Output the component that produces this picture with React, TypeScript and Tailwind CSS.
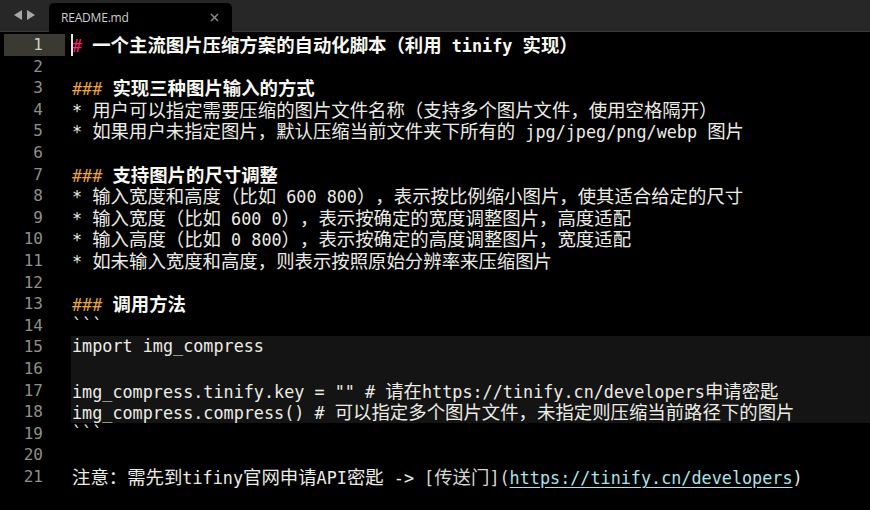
type Kind = "text" | "pink" | "orange" | "bold" | "link" | "dim"
type Token = [string, Kind?]

const lines: Token[][] = [
  [["#", "pink"], [" "], ["一个主流图片压缩方案的自动化脚本（利用 tinify 实现）", "bold"]],
  [],
  [["###", "orange"], [" "], ["实现三种图片输入的方式", "bold"]],
  [["* 用户可以指定需要压缩的图片文件名称（支持多个图片文件，使用空格隔开）"]],
  [["* 如果用户未指定图片，默认压缩当前文件夹下所有的 jpg/jpeg/png/webp 图片"]],
  [],
  [["###", "orange"], [" "], ["支持图片的尺寸调整", "bold"]],
  [["* 输入宽度和高度（比如 600 800），表示按比例缩小图片，使其适合给定的尺寸"]],
  [["* 输入宽度（比如 600 0），表示按确定的宽度调整图片，高度适配"]],
  [["* 输入高度（比如 0 800），表示按确定的高度调整图片，宽度适配"]],
  [["* 如未输入宽度和高度，则表示按照原始分辨率来压缩图片"]],
  [],
  [["###", "orange"], [" "], ["调用方法", "bold"]],
  [["```"]],
  [["import img_compress"]],
  [],
  [['img_compress.tinify.key = "" # 请在https://tinify.cn/developers申请密匙']],
  [["img_compress.compress() # 可以指定多个图片文件，未指定则压缩当前路径下的图片"]],
  [["```"]],
  [],
  [
    ["注意：需先到tifiny官网申请API密匙 -> "],
    ["[传送门](", "dim"],
    ["https://tinify.cn/developers", "link"],
    [")"],
  ],
]

const kindClass: Record<Kind, string> = {
  text: "text-[#ecece6]",
  pink: "text-[#f92672]",
  orange: "text-[#eaa43a]",
  bold: "text-[#f8f8f2] font-bold",
  link: "text-[#a9e4ec] underline underline-offset-[3px] decoration-[#a9e4ec]",
  dim: "text-[#d8d8d2]",
}

// split a string into runs of wide (CJK) and narrow (latin) characters
const splitRuns = (s: string) => {
  const out: { wide: boolean; s: string }[] = []
  for (const ch of s) {
    const wide = /[\u2E80-\u9FFF\u3000-\u303F\uFF00-\uFFEF]/.test(ch)
    const last = out[out.length - 1]
    if (last && last.wide === wide) last.s += ch
    else out.push({ wide, s: ch })
  }
  return out
}

const Line = ({ tokens, caret }: { tokens: Token[]; caret?: boolean }) => (
  <div className="relative h-[21.6px] leading-[21.6px] whitespace-pre pl-px [text-spacing-trim:space-all]">
    {caret && <div className="absolute left-0 top-0 w-[2px] h-[21.6px] bg-[#e8e8e2]" />}
    {tokens.map(([text, kind], i) => (
      <span key={i} className={kindClass[kind ?? "text"]}>
        {splitRuns(text).map((r, j) => (
          <span
            key={j}
            className={
              r.wide
                ? "font-['Noto_Sans_CJK_SC',sans-serif] text-[18.4px]"
                : "font-['DejaVu_Sans_Mono',monospace] text-[16.8px]"
            }>
            {r.s}
          </span>
        ))}
      </span>
    ))}
  </div>
)

const App = (): JSX.Element => {
  return (
    <div className="w-[870px] h-[510px] bg-black overflow-hidden flex flex-col">
      {/* TAB BAR */}
      <div className="h-[32px] shrink-0 bg-[#272727] border-b border-[#3a3a3a] flex items-end">
        <div className="w-[49px] h-full flex items-center justify-center gap-[5px] pb-px">
          <svg width="8" height="10" viewBox="0 0 8 10">
            <path d="M8 0 L0 5 L8 10 Z" fill="#a8a8a8" />
          </svg>
          <svg width="8" height="10" viewBox="0 0 8 10">
            <path d="M0 0 L8 5 L0 10 Z" fill="#a8a8a8" />
          </svg>
        </div>
        <div className="w-[183px] h-[29px] -mb-px bg-black rounded-t-[5px] flex items-center pl-[12px] pr-[12px]">
          <span className="font-['Open_Sans',sans-serif] text-[12px] text-[#cfcfcf] tracking-[-0.2px]">
            README.md
          </span>
          <svg className="ml-auto mr-[1px]" width="9" height="9" viewBox="0 0 9 9">
            <path d="M1 1 L8 8 M8 1 L1 8" stroke="#8a8a8a" strokeWidth="1.5" />
          </svg>
        </div>
      </div>

      {/* EDITOR */}
      <div className="flex flex-1 pt-[2px]">
        <div className="w-[71px] shrink-0">
          {lines.map((_, i) => (
            <div
              key={i}
              className={`ml-[4px] w-[61px] pr-[22px] h-[21.6px] leading-[21.6px] text-right font-['DejaVu_Sans_Mono',monospace] text-[16px] ${
                i === 0 ? "bg-[#3a3a33] text-[#cfcfc8]" : "text-[#8f908a]"
              }`}>
              {i + 1}
            </div>
          ))}
        </div>
        <div className="flex-1">
          {lines.slice(0, 14).map((t, i) => (
            <Line key={i} tokens={t} caret={i === 0} />
          ))}
          {/* fenced code block */}
          <div className="bg-[#141414]">
            {lines.slice(14, 18).map((t, i) => (
              <Line key={i} tokens={t} />
            ))}
          </div>
          {lines.slice(18).map((t, i) => (
            <Line key={i} tokens={t} />
          ))}
        </div>
      </div>
    </div>
  )
}

export default App
